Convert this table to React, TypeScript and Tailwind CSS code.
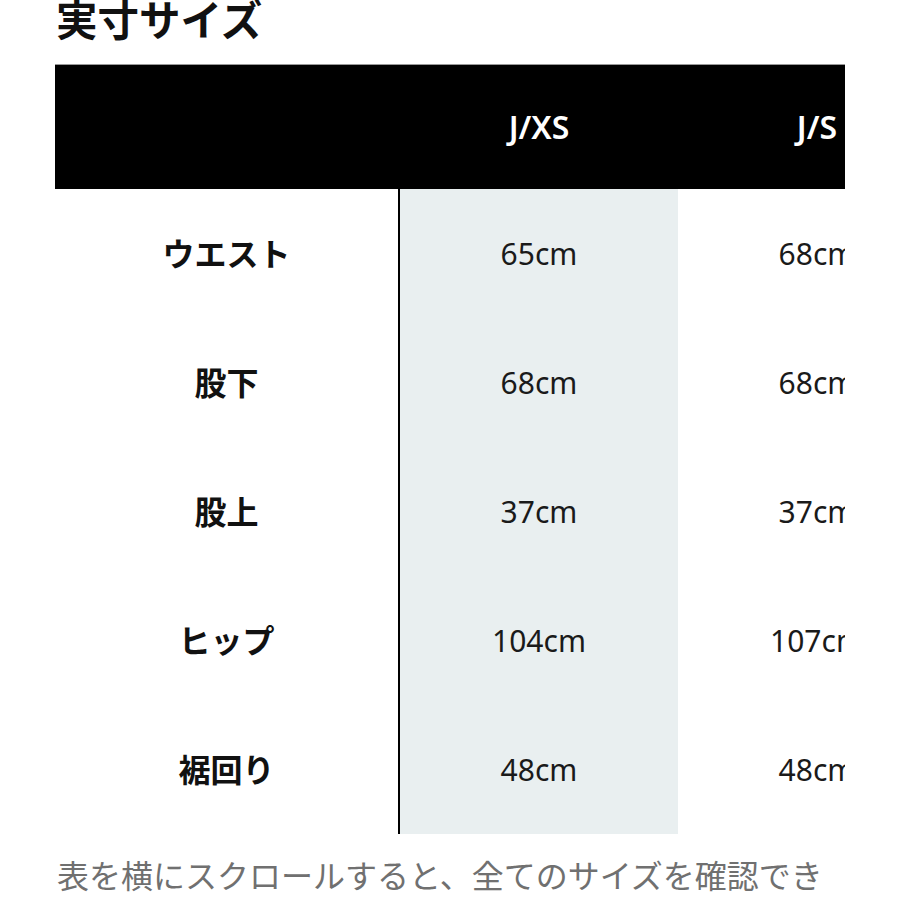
import React from 'react';

const sizes = ['J/XS', 'J/S'];

const rows = [
  { label: 'ウエスト', values: ['65cm', '68cm'] },
  { label: '股下', values: ['68cm', '68cm'] },
  { label: '股上', values: ['37cm', '37cm'] },
  { label: 'ヒップ', values: ['104cm', '107cm'] },
  { label: '裾回り', values: ['48cm', '48cm'] },
];

const jp = { fontFamily: '"Noto Sans", "Noto Sans CJK JP", sans-serif' };

export default function App() {
  return (
    <div className="w-[900px] h-[900px] bg-white overflow-hidden" style={jp}>
      <div className="flex pl-[56px] h-[64px]">
        <h2 className="text-[41.5px] font-bold leading-[40px] text-[#111]">実寸サイズ</h2>
      </div>

      <div className="ml-[55px] w-[790px] overflow-hidden">
        <div className="grid grid-cols-[345px_278px_278px] w-max">
          <div className="h-[125px] bg-black border-t border-[#999]"></div>
          {sizes.map((s) => (
            <div
              key={s}
              className="h-[125px] bg-black border-t border-[#999] flex items-center justify-center text-white text-[32px] font-semibold"
            >
              {s}
            </div>
          ))}

          {rows.map((r) => (
            <React.Fragment key={r.label}>
              <div className="h-[129px] border-r-2 border-black flex items-center justify-center text-[32px] font-bold text-[#111]">
                {r.label}
              </div>
              <div className="h-[129px] bg-[#e9eff0] flex items-center justify-center text-[30px] text-[#1a1a1a]">
                {r.values[0]}
              </div>
              <div className="h-[129px] flex items-center justify-center text-[30px] text-[#1a1a1a]">
                {r.values[1]}
              </div>
            </React.Fragment>
          ))}
        </div>
      </div>

      <div className="pl-[57px] pt-[22px] whitespace-nowrap">
        <p className="text-[32px] leading-[40px] text-[#707070]">表を横にスクロールすると、全てのサイズを確認でき</p>
      </div>
    </div>
  );
}
